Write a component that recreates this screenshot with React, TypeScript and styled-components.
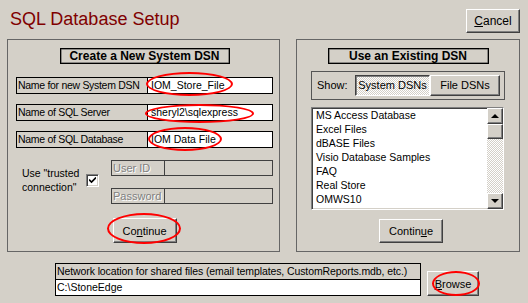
import React from "react";
import styled, { createGlobalStyle, css } from "styled-components";

const GlobalStyle = createGlobalStyle`
  html, body {
    margin: 0;
    padding: 0;
    background: #d4d0c8;
  }
  body {
    font-family: "Liberation Sans", Arial, sans-serif;
    font-size: 10.5px;
    color: #000;
  }
`;

const raised = css`
  border: 1px solid;
  border-color: #fff #404040 #404040 #fff;
  box-shadow: inset -1px -1px 0 #808080;
  background: #d4d0c8;
`;

const sunken = css`
  border: 1px solid;
  border-color: #808080 #fff #fff #808080;
  box-shadow: inset 1px 1px 0 #404040, inset -1px -1px 0 #d4d0c8;
`;

const checker = css`
  background-color: #d4d0c8;
  background-image: repeating-conic-gradient(#fff 0 25%, #d4d0c8 0 50%);
  background-size: 2px 2px;
`;

const Page = styled.div`
  position: relative;
  width: 528px;
  height: 303px;
  box-sizing: border-box;
  padding: 0 8px 0 7px;
  background: #d4d0c8;
  overflow: hidden;
`;

const Header = styled.div`
  display: flex;
  justify-content: space-between;
  align-items: flex-start;
  height: 39px;
`;

const Title = styled.h1`
  margin: 9px 0 0 3px;
  font-size: 18px;
  line-height: 21px;
  font-weight: normal;
  color: #800000;
`;

const Button = styled.button<{ $w: number; $h: number }>`
  ${raised};
  width: ${({ $w }) => $w}px;
  height: ${({ $h }) => $h}px;
  padding: 0;
  box-sizing: border-box;
  font-family: "Liberation Sans", Arial, sans-serif;
  font-size: 11px;
  color: #000;
`;

const CancelButton = styled(Button)`
  margin-top: 9px;
  font-size: 12px;
`;

const Panels = styled.div`
  display: flex;
  gap: 16px;
`;

const Panel = styled.div<{ $w: number; $pad: number; $padRight: number }>`
  width: ${({ $w }) => $w}px;
  height: 213px;
  box-sizing: border-box;
  border: 1px solid #666;
  padding: 8px ${({ $padRight }) => $padRight}px 0 ${({ $pad }) => $pad}px;
  display: flex;
  flex-direction: column;
  align-items: center;
`;

const Heading = styled.div<{ $w: number }>`
  width: ${({ $w }) => $w}px;
  height: 16px;
  box-sizing: border-box;
  border: 1px solid #000;
  box-shadow: inset 0 0 0 0.5px #404040;
  font-weight: bold;
  font-size: 12px;
  line-height: 14px;
  text-align: center;
`;

const Rows = styled.div`
  align-self: stretch;
  margin-top: 13px;
  display: flex;
  flex-direction: column;
  gap: 10px;
`;

const Row = styled.div`
  display: flex;
  height: 17px;
  box-sizing: border-box;
  border: 1px solid #000;
`;

const RowLabel = styled.div`
  width: 129px;
  border-right: 1px solid #000;
  padding-left: 1px;
  line-height: 15px;
  letter-spacing: -0.3px;
  white-space: nowrap;
  overflow: hidden;
`;

const RowValue = styled.div`
  flex: 1;
  background: #fff;
  padding-left: 3px;
  line-height: 15px;
  white-space: nowrap;
`;

const Trusted = styled.div`
  align-self: stretch;
  margin-top: 12px;
  display: flex;
  align-items: center;
`;

const TrustGroup = styled.div`
  width: 95px;
  box-sizing: border-box;
  padding-left: 6px;
  display: flex;
  align-items: center;
`;

const TrustLabel = styled.div`
  width: 64px;
  line-height: 14px;
  margin-top: -4px;
  white-space: nowrap;
`;

const CheckBox = styled.div`
  ${sunken};
  width: 13px;
  height: 13px;
  margin-top: -3px;
  box-sizing: border-box;
  background: #fff;
  display: flex;
  align-items: center;
  justify-content: center;
`;

const Fields = styled.div`
  flex: 1;
  display: flex;
  flex-direction: column;
  gap: 12px;
`;

const Field = styled.div`
  display: flex;
  height: 16px;
  box-sizing: border-box;
  border: 1px solid #404040;
`;

const FieldLabel = styled.div`
  width: 51px;
  border-right: 1px solid #404040;
  padding-left: 1px;
  font-size: 11px;
  line-height: 14px;
  color: #808080;
  text-shadow: 1px 1px 0 #fff;
`;

const ContinueButton = styled(Button)<{ $top: number; $shift?: number }>`
  margin-top: ${({ $top }) => $top}px;
  margin-left: ${({ $shift }) => $shift || 0}px;
`;

const ShowGroup = styled.div`
  align-self: stretch;
  margin-top: 7px;
  height: 29px;
  box-sizing: border-box;
  border: 1px solid #555;
  padding: 3px 0 0 5px;
  display: flex;
  align-items: flex-start;
`;

const ShowLabel = styled.span`
  width: 38px;
  font-size: 11px;
  line-height: 21px;
`;

const Toggle = styled.div<{ $w: number; $pressed?: boolean }>`
  width: ${({ $w }) => $w}px;
  height: 21px;
  box-sizing: border-box;
  font-size: 11px;
  line-height: 19px;
  text-align: center;
  white-space: nowrap;
  ${({ $pressed }) =>
    $pressed
      ? css`
          ${checker};
          border: 1px solid;
          border-color: #404040 #fff #fff #404040;
          box-shadow: inset 1px 1px 0 #808080;
        `
      : raised}
`;

const ListBox = styled.div`
  ${sunken};
  align-self: flex-start;
  margin-top: 7px;
  width: 193px;
  height: 103px;
  box-sizing: border-box;
  background: #fff;
  display: flex;
  overflow: hidden;
`;

const ListItems = styled.div`
  flex: 1;
  padding: 0 0 0 4px;
  overflow: hidden;
`;

const ListItem = styled.div`
  line-height: 14px;
  white-space: nowrap;
`;

const ScrollBar = styled.div`
  width: 16px;
  display: flex;
  flex-direction: column;
  ${checker};
`;

const ScrollButton = styled.div`
  ${raised};
  width: 16px;
  height: 16px;
  box-sizing: border-box;
  display: flex;
  align-items: center;
  justify-content: center;
`;

const Thumb = styled.div`
  ${raised};
  width: 16px;
  height: 15px;
  box-sizing: border-box;
`;

const Track = styled.div`
  flex: 1;
`;

const Arrow = styled.div<{ $down?: boolean }>`
  width: 0;
  height: 0;
  border-left: 4px solid transparent;
  border-right: 4px solid transparent;
  ${({ $down }) =>
    $down ? "border-top: 4px solid #000;" : "border-bottom: 4px solid #000;"}
`;

const Bottom = styled.div`
  margin-top: 11px;
  padding-left: 48px;
  display: flex;
  align-items: flex-end;
  gap: 6px;
`;

const NetBox = styled.div`
  width: 366px;
  height: 33px;
  box-sizing: border-box;
  border: 1px solid #000;
  display: flex;
  flex-direction: column;
`;

const NetLabel = styled.div`
  height: 15px;
  border-bottom: 1px solid #000;
  padding-left: 1px;
  line-height: 15px;
  letter-spacing: -0.1px;
  white-space: nowrap;
  overflow: hidden;
`;

const NetValue = styled.div`
  flex: 1;
  background: #fff;
  padding-left: 1px;
  line-height: 15px;
`;

const Annotation = styled.div<{ $x: number; $y: number; $w: number; $h: number }>`
  position: absolute;
  left: ${({ $x }) => $x}px;
  top: ${({ $y }) => $y}px;
  width: ${({ $w }) => $w}px;
  height: ${({ $h }) => $h}px;
  box-sizing: border-box;
  border: 2px solid #f00;
  border-radius: 50%;
  pointer-events: none;
`;

const rows = [
  { label: "Name for new System DSN", value: "IOM_Store_File" },
  { label: "Name of SQL Server", value: "sheryl2\\sqlexpress" },
  { label: "Name of SQL Database", value: "IOM Data File" },
];

const dsns = [
  "MS Access Database",
  "Excel Files",
  "dBASE Files",
  "Visio Database Samples",
  "FAQ",
  "Real Store",
  "OMWS10",
  "SETHSHOES TEST",
];

const marks = [
  { x: 146, y: 72, w: 87, h: 24 },
  { x: 145, y: 104, w: 109, h: 19 },
  { x: 148, y: 127, w: 74, h: 24 },
  { x: 107, y: 213, w: 74, h: 31 },
  { x: 432, y: 271, w: 48, h: 25 },
];

const CheckMark = () => (
  <svg width="7" height="7" viewBox="0 0 7 7">
    <path d="M0 2.5 L2.5 5 L7 0.5" stroke="#000" strokeWidth="1.6" fill="none" />
  </svg>
);

const App = () => {
  return (
    <Page>
      <GlobalStyle />
      <Header>
        <Title>SQL Database Setup</Title>
        <CancelButton $w={54} $h={24}>
          <u>C</u>ancel
        </CancelButton>
      </Header>

      <Panels>
        <Panel $w={273} $pad={8} $padRight={6}>
          <Heading $w={170}>Create a New System DSN</Heading>
          <Rows>
            {rows.map((r) => (
              <Row key={r.label}>
                <RowLabel>{r.label}</RowLabel>
                <RowValue>{r.value}</RowValue>
              </Row>
            ))}
          </Rows>
          <Trusted>
            <TrustGroup>
              <TrustLabel>
                Use "trusted
                <br />
                connection"
              </TrustLabel>
              <CheckBox>
                <CheckMark />
              </CheckBox>
            </TrustGroup>
            <Fields>
              <Field>
                <FieldLabel>User ID</FieldLabel>
              </Field>
              <Field>
                <FieldLabel>Password</FieldLabel>
              </Field>
            </Fields>
          </Trusted>
          <ContinueButton $w={64} $h={25} $top={14}>
            Co<u>n</u>tinue
          </ContinueButton>
        </Panel>

        <Panel $w={224} $pad={14} $padRight={14}>
          <Heading $w={161}>Use an Existing DSN</Heading>
          <ShowGroup>
            <ShowLabel>Show:</ShowLabel>
            <Toggle $w={75} $pressed>
              System DSNs
            </Toggle>
            <Toggle $w={70}>File DSNs</Toggle>
          </ShowGroup>
          <ListBox>
            <ListItems>
              {dsns.map((d) => (
                <ListItem key={d}>{d}</ListItem>
              ))}
            </ListItems>
            <ScrollBar>
              <ScrollButton>
                <Arrow />
              </ScrollButton>
              <Thumb />
              <Track />
              <ScrollButton>
                <Arrow $down />
              </ScrollButton>
            </ScrollBar>
          </ListBox>
          <ContinueButton $w={64} $h={24} $top={9} $shift={6}>
            Contin<u>u</u>e
          </ContinueButton>
        </Panel>
      </Panels>

      <Bottom>
        <NetBox>
          <NetLabel>
            Network location for shared files (email templates, CustomReports.mdb, etc.)
          </NetLabel>
          <NetValue>C:\StoneEdge</NetValue>
        </NetBox>
        <Button $w={52} $h={25}>
          <u>B</u>rowse
        </Button>
      </Bottom>

      {marks.map((m, i) => (
        <Annotation key={i} $x={m.x} $y={m.y} $w={m.w} $h={m.h} />
      ))}
    </Page>
  );
};

export default App;
